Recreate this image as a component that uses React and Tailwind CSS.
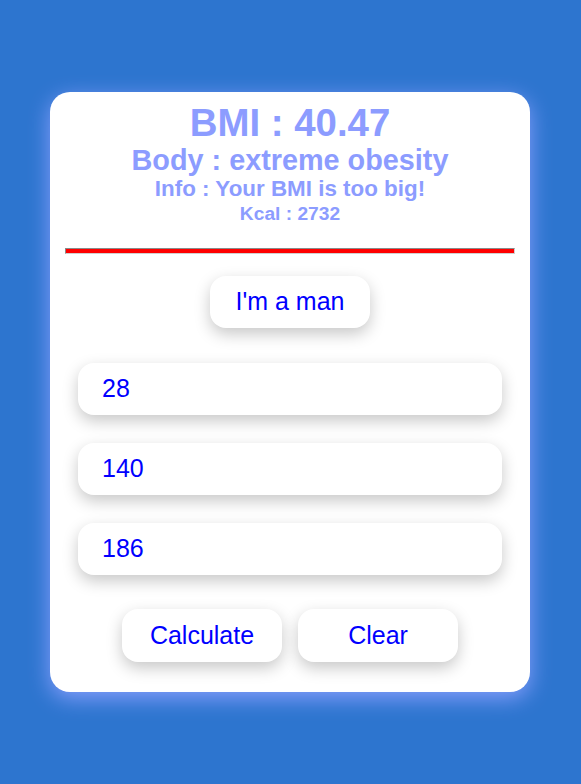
export default function App() {
  return (
    <div
      className="min-h-screen flex items-center justify-center pr-px bg-[#2d75cf]"
      style={{ fontFamily: '"Liberation Sans", Arial, sans-serif' }}
    >
      <div className="w-[480px] h-[600px] bg-white rounded-[20px] shadow-[0_6px_22px_rgba(140,160,255,0.95)] px-[15px] pt-[8px] flex flex-col">
        <div className="flex flex-col items-center text-[#8c9cff] font-bold">
          <div className="text-[38.4px] leading-[46px]">BMI : 40.47</div>
          <div className="text-[28.8px] leading-[28px]">Body : extreme obesity</div>
          <div className="text-[22.4px] leading-[30px]">Info : Your BMI is too big!</div>
          <div className="text-[19.2px] leading-[19px]">Kcal : 2732</div>
        </div>
        <div className="mt-[25px] h-[6px] bg-[#ff0000] border-t border-l border-[#8a8a8a] border-b border-r border-b-[#d0d0d0] border-r-[#d0d0d0]"></div>
        <div className="flex justify-center mt-[22px]">
          <button className="w-[160px] h-[52px] rounded-2xl bg-white text-[25px] text-[#0000ff] shadow-[0_6px_16px_rgba(0,0,0,0.22)]">
            I'm a man
          </button>
        </div>
        <div className="flex flex-col items-center gap-[28px] mt-[35px]">
          {["28", "140", "186"].map((v) => (
            <div
              key={v}
              className="w-[424px] h-[52px] rounded-2xl bg-white shadow-[0_6px_16px_rgba(0,0,0,0.22)] flex items-center pl-[24px] text-[25px] text-[#0000ff]"
            >
              {v}
            </div>
          ))}
        </div>
        <div className="flex justify-center gap-[16px] mt-[34px]">
          <button className="w-[160px] h-[53px] rounded-2xl bg-white text-[25px] text-[#0000ff] shadow-[0_6px_16px_rgba(0,0,0,0.22)]">
            Calculate
          </button>
          <button className="w-[160px] h-[53px] rounded-2xl bg-white text-[25px] text-[#0000ff] shadow-[0_6px_16px_rgba(0,0,0,0.22)]">
            Clear
          </button>
        </div>
      </div>
    </div>
  );
}
